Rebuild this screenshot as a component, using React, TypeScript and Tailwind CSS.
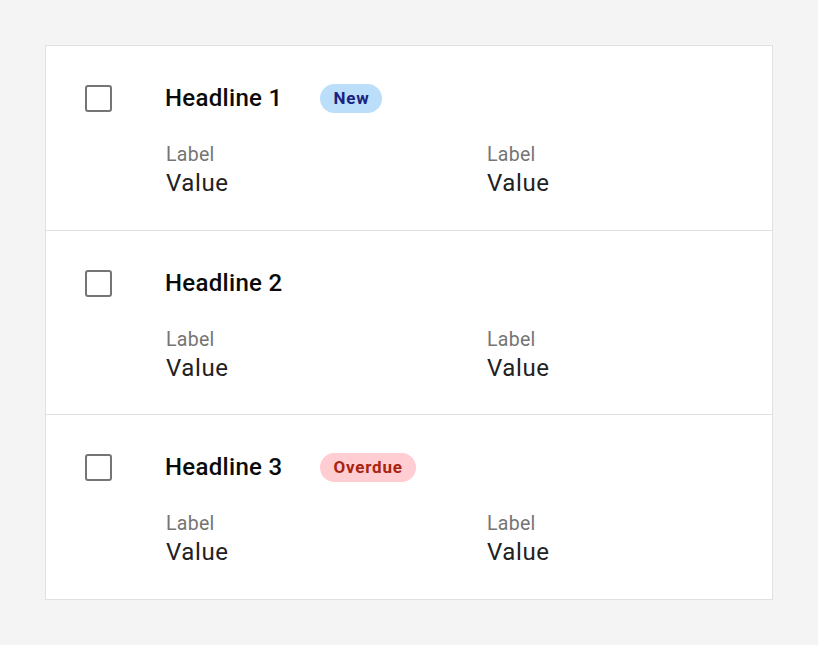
import React from 'react';

type Badge = {text: string; tone: 'info' | 'danger'};

interface Item {
  id: number;
  headline: string;
  badge?: Badge;
  fields: {label: string; value: string}[];
}

const items: Item[] = [
  {
    id: 1,
    headline: 'Headline 1',
    badge: {text: 'New', tone: 'info'},
    fields: [
      {label: 'Label', value: 'Value'},
      {label: 'Label', value: 'Value'},
    ],
  },
  {
    id: 2,
    headline: 'Headline 2',
    fields: [
      {label: 'Label', value: 'Value'},
      {label: 'Label', value: 'Value'},
    ],
  },
  {
    id: 3,
    headline: 'Headline 3',
    badge: {text: 'Overdue', tone: 'danger'},
    fields: [
      {label: 'Label', value: 'Value'},
      {label: 'Label', value: 'Value'},
    ],
  },
];

// row heights incl. divider, so the lines land on 230 / 414
const rowHeights = ['h-[185px]', 'h-[184px]', 'h-[184px]'];

function StatusBadge({badge}: {badge: Badge}) {
  const tone =
    badge.tone === 'info' ? 'bg-[#bbdefb] text-[#1a237e]' : 'bg-[#ffcdd2] text-[#a8240f]';
  return (
    <span
      className={`inline-flex h-[29px] items-center rounded-full px-[13px] text-[17px] font-bold tracking-[0.8px] ${tone}`}
    >
      {badge.text}
    </span>
  );
}

function Row({item, index, last}: {item: Item; index: number; last: boolean}) {
  return (
    <div
      className={`flex pl-[39px] pt-[38px] ${rowHeights[index]} ${last ? '' : 'border-b border-[#e0e0e0]'}`}
    >
      {/* checkbox column */}
      <div className="flex h-[29px] items-center">
        <span className="block h-[27px] w-[27px] rounded-[3px] border-[2.6px] border-[#757575] bg-white" />
      </div>

      <div className="ml-[53px] flex-1">
        <div className="flex h-[29px] items-center gap-[38px]">
          <h3 className="text-[24px] font-medium leading-[29px] tracking-[0.3px] text-[#0a0a0a]">
            {item.headline}
          </h3>
          {item.badge && <StatusBadge badge={item.badge} />}
        </div>

        <div className="mt-[29px] grid grid-cols-[321px_1fr]">
          {item.fields.map((f, i) => (
            <div key={i} className="pl-[1px]">
              <div className="text-[19.5px] leading-[26px] tracking-[0.3px] text-[#757575]">
                {f.label}
              </div>
              <div className="mt-[1px] text-[24px] leading-[28px] tracking-[0.6px] text-[#212121]">
                {f.value}
              </div>
            </div>
          ))}
        </div>
      </div>
    </div>
  );
}

export default function App() {
  return (
    <div
      className="min-h-[645px] bg-[#f4f4f4] pl-[45px] pt-[45px]"
      style={{fontFamily: 'Roboto, "Noto Sans", sans-serif'}}
    >
      <div className="w-[728px] border border-[#e0e0e0] bg-white">
        {items.map((item, i) => (
          <Row key={item.id} item={item} index={i} last={i === items.length - 1} />
        ))}
      </div>
    </div>
  );
}
